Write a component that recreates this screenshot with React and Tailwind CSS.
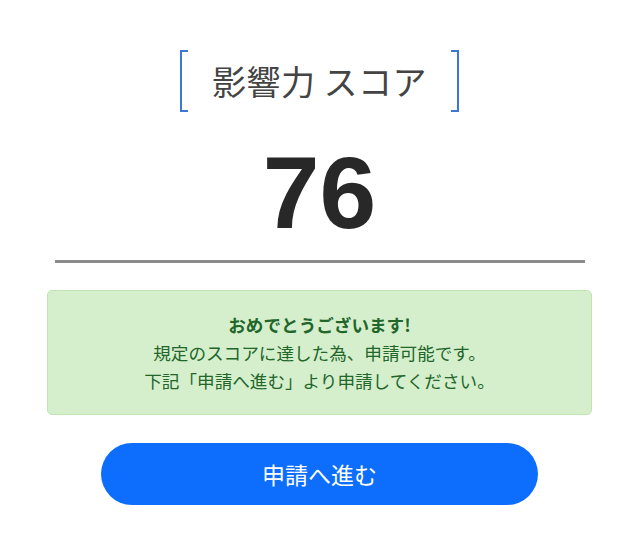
// App.jsx
import React from "react";

const jp = { fontFamily: '"Noto Sans CJK JP", "Noto Sans", sans-serif' };

const App = () => {
  return (
    <div className="w-[639px] h-[547px] bg-white flex flex-col items-center" style={jp}>
      {/* Title with brackets */}
      <div className="mt-[50px] flex items-center h-[62px]">
        <div className="w-[8px] h-[62px] border-l-2 border-t-2 border-b-2 border-[#3a78d4]" />
        <h1 className="px-[24px] text-[34px] leading-none text-[#444444] font-normal tracking-[0.5px]">
          影響力 スコア
        </h1>
        <div className="w-[8px] h-[62px] border-r-2 border-t-2 border-b-2 border-[#3a78d4]" />
      </div>

      {/* Score */}
      <div
        className="mt-[30px] text-[102px] leading-none font-bold text-[#282828]"
        style={{ fontFamily: '"Liberation Sans", Arial, sans-serif' }}
      >
        76
      </div>

      {/* Divider */}
      <div className="mt-[16px] w-[530px] h-[3px] bg-[#8a8a8a]" />

      {/* Message box */}
      <div className="mt-[27px] w-[545px] h-[125px] rounded-[5px] border border-[#bfe5b3] bg-[#d5efcd] flex flex-col items-center justify-center text-[#22662a] text-[17.6px] leading-[28px]">
        <p className="font-bold">おめでとうございます!</p>
        <p>規定のスコアに達した為、申請可能です。</p>
        <p>下記「申請へ進む」より申請してください。</p>
      </div>

      {/* Button */}
      <button className="mt-[28px] w-[437px] h-[62px] rounded-full bg-[#0d6efd] text-white text-[23px] flex items-center justify-center">
        申請へ進む
      </button>
    </div>
  );
};

export default App;
